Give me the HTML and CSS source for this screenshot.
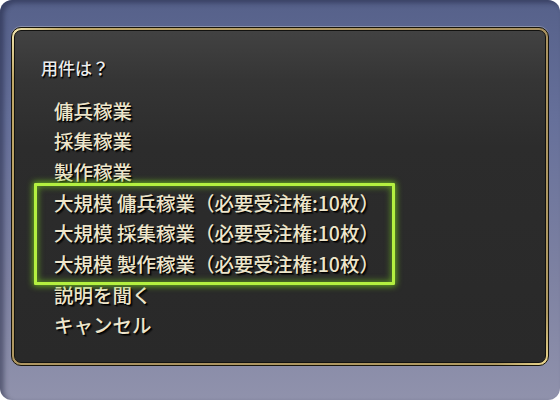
FILE: index.html
```html
<!DOCTYPE html>
<html lang="ja">
<head>
<meta charset="utf-8">
<link rel="stylesheet" href="styles.css">
</head>
<body>
<div class="frame">
  <div class="panel">
    <div class="panel-inner">
      <div class="title">用件は？</div>
      <ul class="menu">
        <li>傭兵稼業</li>
        <li>採集稼業</li>
        <li>製作稼業</li>
        <li class="group">
          <ul class="menu sub">
            <li>大規模 傭兵稼業（必要受注権:10枚）</li>
            <li>大規模 採集稼業（必要受注権:10枚）</li>
            <li>大規模 製作稼業（必要受注権:10枚）</li>
          </ul>
        </li>
        <li>説明を聞く</li>
        <li>キャンセル</li>
      </ul>
    </div>
  </div>
</div>
</body>
</html>
```
FILE: styles.css
```css
html, body {
  margin: 0;
  padding: 0;
  background: #ffffff;
}
body {
  width: 560px;
  height: 400px;
  overflow: hidden;
  font-family: "Noto Sans CJK JP", "Noto Sans", sans-serif;
}
.frame {
  width: 560px;
  height: 400px;
  box-sizing: border-box;
  border-radius: 12px;
  background: linear-gradient(180deg, #56618a 0%, #66709a 30%, #7e82a2 70%, #9092ac 100%);
  box-shadow: inset 4px 3px 5px rgba(20, 25, 50, 0.45);
  display: flex;
  flex-direction: column;
  padding: 27px 11px 34px 11px;
}
.panel {
  flex: 1;
  border: 1px solid #17140a;
  border-radius: 10px;
  padding: 2px;
  background: linear-gradient(135deg, #f4e8b0 0%, #c0a868 6%, #a89060 50%, #b09a62 94%, #ecd890 100%);
  box-shadow: 0 -1px 0 rgba(190, 190, 200, 0.5);
  display: flex;
}
.panel-inner {
  flex: 1;
  border: 1px solid #121210;
  border-radius: 7px;
  background: linear-gradient(180deg, #424242 0%, #353535 15%, #2c2c2c 35%, #292929 100%);
  padding: 27px 0 0 26px;
}
.title {
  font-size: 17px;
  line-height: 20px;
  font-weight: 500;
  color: #ececec;
  text-shadow: 1px 1px 0 #000, 1px 2px 1px rgba(0,0,0,0.7);
}
.menu {
  list-style: none;
  margin: 17.6px 0 0 13px;
  padding: 0;
}
.menu li {
  font-size: 19.5px;
  line-height: 30.7px;
  height: 30.7px;
  font-weight: 500;
  color: #ede5cb;
  white-space: nowrap;
  text-shadow: 1px 1px 0 #000, 2px 2px 1px rgba(0,0,0,0.6);
}
.menu.sub {
  margin: 0;
}
.menu li.group {
  height: auto;
  position: relative;
}
.menu li.group::before {
  content: "";
  position: absolute;
  top: -5px;
  bottom: -5px;
  left: -20px;
  width: 355px;
  border: 3px solid #b4f040;
  border-radius: 1px;
  box-shadow: 0 0 6px 1px rgba(120, 210, 30, 0.8), inset 0 0 6px 1px rgba(120, 210, 30, 0.6);
}
```
